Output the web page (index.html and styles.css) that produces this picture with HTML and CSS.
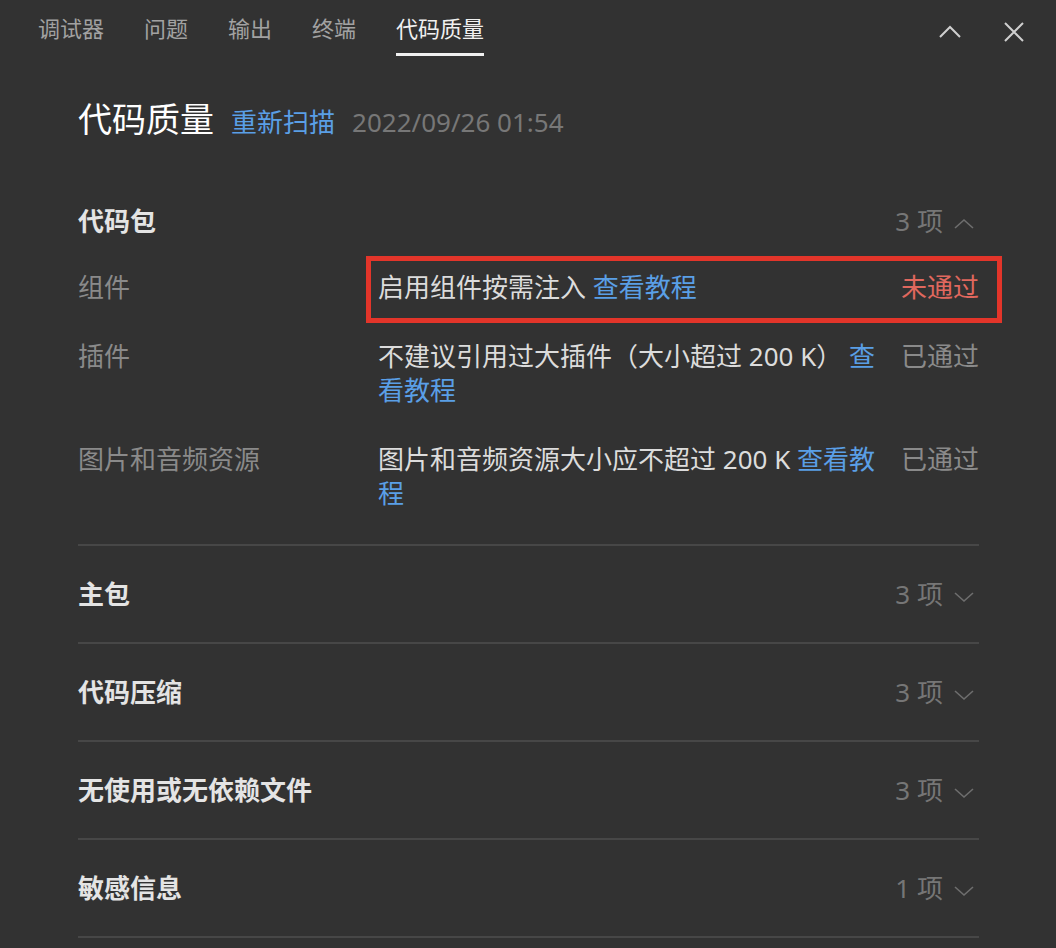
FILE: index.html
```html
<!DOCTYPE html>
<html lang="zh-cmn-Hans">

<head>
    <meta charset="UTF-8">
    <meta name="viewport" content="width=device-width, initial-scale=1.0">
    <title>代码质量</title>
    <link rel="stylesheet" href="styles.css">
</head>

<body>
    <div class="panel">
        <div class="tabbar">
            <div class="tabs">
                <span class="tab">调试器</span>
                <span class="tab">问题</span>
                <span class="tab">输出</span>
                <span class="tab">终端</span>
                <span class="tab current">代码质量</span>
            </div>
            <div class="tabbar-tools">
                <svg class="tool-icon" width="24" height="24" viewBox="0 0 24 24">
                    <path d="M2 17 L12 7 L22 17" />
                </svg>
                <svg class="tool-icon" width="24" height="24" viewBox="0 0 24 24">
                    <path d="M3 3 L21 21 M21 3 L3 21" />
                </svg>
            </div>
        </div>

        <div class="content">
            <div class="title-row">
                <h1 class="title">代码质量</h1>
                <a class="link rescan" href="">重新扫描</a>
                <span class="scan-time">2022/09/26 01:54</span>
            </div>

            <!-- 代码包 -->
            <div class="section open">
                <div class="section-head">
                    <span class="section-name">代码包</span>
                    <span class="section-count">3 项
                        <svg class="arrow" width="20" height="12" viewBox="0 0 20 12">
                            <path d="M1 10 L10 2 L19 10" />
                        </svg>
                    </span>
                </div>
                <div class="row">
                    <div class="row-label">组件</div>
                    <div class="row-body marked">
                        <div class="row-desc">启用组件按需注入 <a class="link" href="">查看教程</a></div>
                        <div class="row-status fail">未通过</div>
                    </div>
                </div>
                <div class="row">
                    <div class="row-label">插件</div>
                    <div class="row-body">
                        <div class="row-desc">不建议引用过大插件（大小超过 200 K） <a class="link" href="">查看教程</a></div>
                        <div class="row-status">已通过</div>
                    </div>
                </div>
                <div class="row">
                    <div class="row-label">图片和音频资源</div>
                    <div class="row-body">
                        <div class="row-desc">图片和音频资源大小应不超过 200 K <a class="link" href="">查看教程</a></div>
                        <div class="row-status">已通过</div>
                    </div>
                </div>
            </div>

            <div class="section">
                <div class="section-head">
                    <span class="section-name">主包</span>
                    <span class="section-count">3 项
                        <svg class="arrow" width="20" height="12" viewBox="0 0 20 12">
                            <path d="M1 2 L10 10 L19 2" />
                        </svg>
                    </span>
                </div>
            </div>

            <div class="section">
                <div class="section-head">
                    <span class="section-name">代码压缩</span>
                    <span class="section-count">3 项
                        <svg class="arrow" width="20" height="12" viewBox="0 0 20 12">
                            <path d="M1 2 L10 10 L19 2" />
                        </svg>
                    </span>
                </div>
            </div>

            <div class="section">
                <div class="section-head">
                    <span class="section-name">无使用或无依赖文件</span>
                    <span class="section-count">3 项
                        <svg class="arrow" width="20" height="12" viewBox="0 0 20 12">
                            <path d="M1 2 L10 10 L19 2" />
                        </svg>
                    </span>
                </div>
            </div>

            <div class="section">
                <div class="section-head">
                    <span class="section-name">敏感信息</span>
                    <span class="section-count">1 项
                        <svg class="arrow" width="20" height="12" viewBox="0 0 20 12">
                            <path d="M1 2 L10 10 L19 2" />
                        </svg>
                    </span>
                </div>
            </div>
        </div>
    </div>
</body>

</html>
```

FILE: styles.css
```css
* {
    margin: 0;
    padding: 0;
    box-sizing: border-box;
}

html,
body {
    height: 100%;
}

body {
    background-color: #323232;
    font-family: "Noto Sans", "Noto Sans CJK SC", sans-serif;
    color: #dcdcdc;
}

a {
    text-decoration: none;
}

.panel {
    min-height: 100%;
    background-color: #323232;
}

/* 顶部标签栏 */
.tabbar {
    height: 58px;
    display: flex;
    justify-content: space-between;
    align-items: flex-start;
    padding: 0 30px 0 38px;
}

.tabs {
    display: flex;
    gap: 40px;
}

.tab {
    height: 56px;
    padding-top: 3px;
    border-bottom: 3px solid transparent;
    display: flex;
    align-items: center;
    font-size: 22px;
    line-height: 30px;
    color: #a2a2a2;
}

.tab.current {
    color: #f0f0f0;
    border-bottom-color: #f0f0f0;
}

.tabbar-tools {
    display: flex;
    gap: 40px;
    padding-top: 20px;
}

.tool-icon path {
    fill: none;
    stroke: #cfcfcf;
    stroke-width: 2;
}

/* 内容 */
.content {
    padding: 37px 77px 0 78px;
}

.title-row {
    display: flex;
    align-items: baseline;
    gap: 17px;
    line-height: 48px;
    margin-bottom: 27px;
}

.title {
    font-size: 34px;
    font-weight: normal;
    color: #ffffff;
}

.link {
    color: #5a9fe6;
}

.rescan {
    font-size: 26px;
}

.scan-time {
    font-size: 26px;
    color: #777;
}

.section {
    border-bottom: 2px solid #474747;
}

.section.open {
    padding-bottom: 16px;
}

.section-head {
    display: flex;
    justify-content: space-between;
    align-items: center;
    padding: 31px 0;
    line-height: 34px;
}

.section.open .section-head {
    padding-bottom: 15px;
}

.section-name {
    font-size: 26px;
    font-weight: bold;
    color: #e4e4e4;
}

.section-count {
    display: flex;
    align-items: center;
    gap: 11px;
    font-size: 26px;
    color: #767676;
}

.arrow {
    margin: 6px 5px 0 0;
}

.arrow path {
    fill: none;
    stroke: #6e6e6e;
    stroke-width: 1.6;
}

.row {
    display: flex;
    padding: 17px 0 18px;
    font-size: 26px;
    line-height: 34px;
}

.row-label {
    width: 300px;
    flex-shrink: 0;
    color: #8a8a8a;
}

.row-body {
    flex: 1;
    display: flex;
    gap: 20px;
    position: relative;
}

.row-desc {
    flex: 1;
    color: #dcdcdc;
}

.row-status {
    white-space: nowrap;
    color: #8a8a8a;
}

.row-status.fail {
    color: #e0685e;
}

/* 标注框 */
.marked::after {
    content: "";
    position: absolute;
    top: -14px;
    bottom: -19px;
    left: -12px;
    right: -23px;
    border: 5px solid #e3352a;
}
```
